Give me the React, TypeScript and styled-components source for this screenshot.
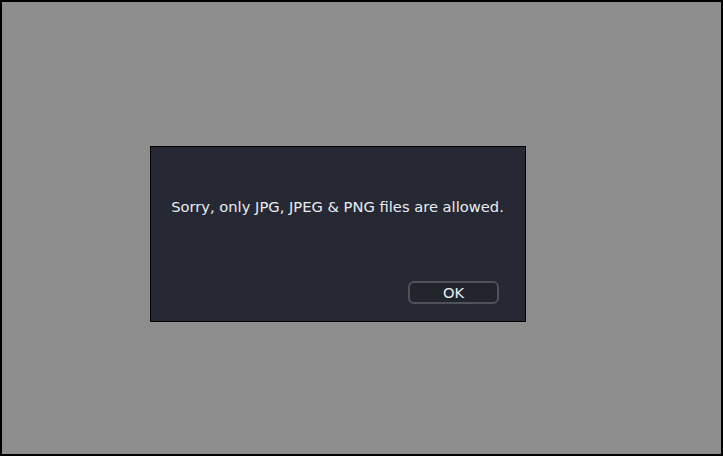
import React from "react";
import styled, { createGlobalStyle } from "styled-components";

const GlobalStyle = createGlobalStyle`
  html, body {
    margin: 0;
    padding: 0;
  }
  body {
    font-family: "DejaVu Sans", "Liberation Sans", sans-serif;
  }
`;

const Screen = styled.div`
  box-sizing: border-box;
  width: 723px;
  height: 456px;
  background: #8e8e8e;
  border: 2px solid #000;
  padding: 144px 0 0 148px;
`;

const Dialog = styled.div`
  box-sizing: border-box;
  width: 376px;
  height: 176px;
  background: #262833;
  border: 1px solid #000;
  display: flex;
  flex-direction: column;
  padding: 0 26px 17px 20px;
`;

const Message = styled.p`
  margin: 0 -5px 0 0;
  padding-top: 51px;
  flex: 1;
  text-align: center;
  color: #e8ecf2;
  font-size: 14.7px;
  line-height: 18px;
  white-space: nowrap;
`;

const Actions = styled.div`
  display: flex;
  justify-content: flex-end;
`;

const Button = styled.button`
  box-sizing: border-box;
  width: 91px;
  height: 23px;
  border: 2px solid #50525b;
  border-radius: 6px;
  background: #23252d;
  color: #e8ecf2;
  font-family: "DejaVu Sans", "Liberation Sans", sans-serif;
  font-size: 14.7px;
  line-height: 18px;
  padding: 0;
`;

export default function App() {
  return (
    <>
      <GlobalStyle />
      <Screen>
        <Dialog>
          <Message>Sorry, only JPG, JPEG &amp; PNG files are allowed.</Message>
          <Actions>
            <Button>OK</Button>
          </Actions>
        </Dialog>
      </Screen>
    </>
  );
}
